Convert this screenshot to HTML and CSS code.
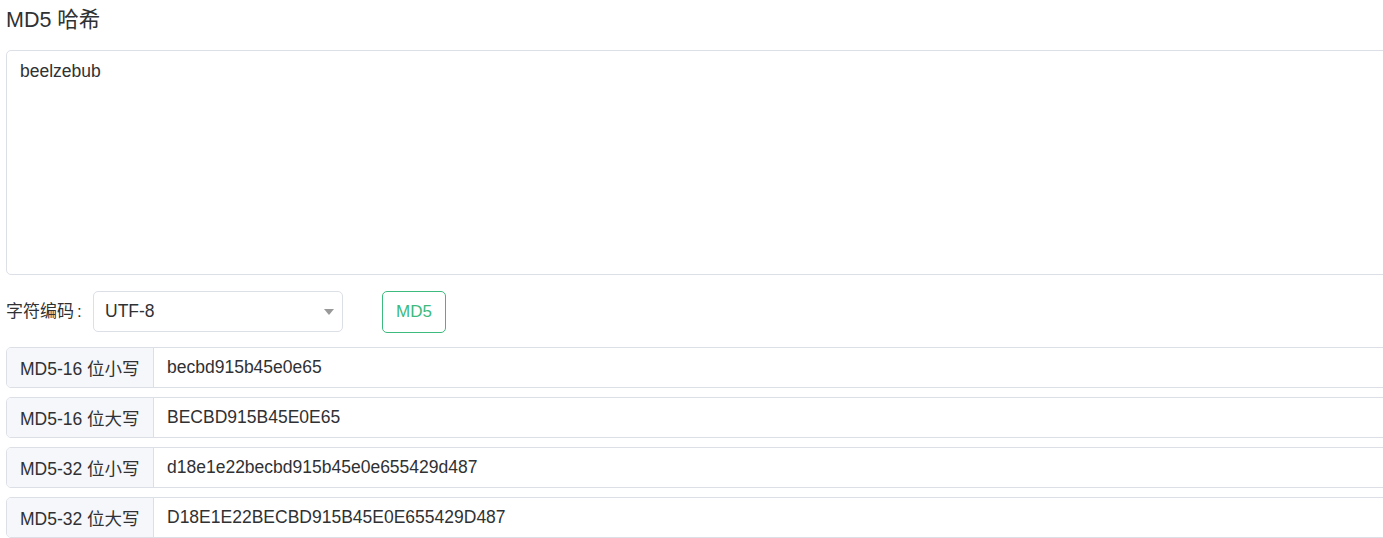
FILE: index.html
```html
<!DOCTYPE html>
<html lang="zh-CN">
<head>
<meta charset="utf-8">
<title>MD5 哈希</title>
<link rel="stylesheet" href="styles.css">
</head>
<body>
<div class="page">
  <h1 class="title">MD5 哈希</h1>
  <textarea class="source">beelzebub</textarea>
  <div class="controls">
    <label class="enc-label">字符编码<span class="colon">:</span></label>
    <div class="select">
      <span class="select-value">UTF-8</span>
      <span class="caret"></span>
    </div>
    <button class="btn-md5">MD5</button>
  </div>
  <div class="results">
    <div class="row"><div class="row-label">MD5-16 位小写</div><div class="row-value">becbd915b45e0e65</div></div>
    <div class="row"><div class="row-label">MD5-16 位大写</div><div class="row-value">BECBD915B45E0E65</div></div>
    <div class="row"><div class="row-label">MD5-32 位小写</div><div class="row-value">d18e1e22becbd915b45e0e655429d487</div></div>
    <div class="row"><div class="row-label">MD5-32 位大写</div><div class="row-value">D18E1E22BECBD915B45E0E655429D487</div></div>
  </div>
</div>
</body>
</html>
```

FILE: styles.css
```css
html, body {
  margin: 0;
  padding: 0;
  background: #fff;
  overflow: hidden;
}
body {
  font-family: "Liberation Sans", "Noto Sans CJK SC", sans-serif;
  color: #303133;
}
.page {
  width: 1420px;
  padding: 0 0 0 6px;
}
.title {
  margin: 0;
  height: 50px;
  padding-top: 5px;
  box-sizing: border-box;
  font-size: 21.5px;
  font-weight: normal;
  line-height: 30px;
  color: #303133;
}
.source {
  display: block;
  width: 100%;
  height: 225px;
  box-sizing: border-box;
  margin: 0;
  padding: 10px 13px;
  border: 1px solid #dcdfe6;
  border-radius: 5px;
  font-family: inherit;
  font-size: 17.5px;
  line-height: 20px;
  color: #303133;
  resize: none;
  outline: none;
}
.controls {
  display: flex;
  align-items: flex-start;
  margin-top: 16px;
  height: 42px;
}
.enc-label {
  font-size: 17px;
  line-height: 41px;
  color: #303133;
  width: 87px;
}
.colon {
  margin-left: 3px;
}
.select {
  position: relative;
  width: 250px;
  height: 41px;
  box-sizing: border-box;
  border: 1px solid #dcdfe6;
  border-radius: 5px;
  display: flex;
  align-items: center;
  padding-left: 11px;
  font-size: 17.5px;
}
.caret {
  position: absolute;
  right: 8px;
  top: 17px;
  width: 0;
  height: 0;
  border-left: 5px solid transparent;
  border-right: 5px solid transparent;
  border-top: 6px solid #999;
}
.btn-md5 {
  margin-left: 39px;
  width: 64px;
  height: 42px;
  box-sizing: border-box;
  background: #fff;
  border: 1px solid #3dba7e;
  border-radius: 5px;
  color: #3dba7e;
  font-family: inherit;
  font-size: 17px;
  padding: 0;
}
.results {
  margin-top: 14px;
  display: flex;
  flex-direction: column;
  gap: 9px;
}
.row {
  display: flex;
  height: 41px;
  box-sizing: border-box;
  border: 1px solid #dcdfe6;
  border-radius: 5px;
  font-size: 17.5px;
  overflow: hidden;
}
.row-label {
  width: 147px;
  box-sizing: border-box;
  background: #f5f7fa;
  border-right: 1px solid #dcdfe6;
  display: flex;
  align-items: center;
  padding-left: 13px;
  white-space: nowrap;
}
.row-value {
  flex: 1;
  display: flex;
  align-items: center;
  padding-left: 13px;
  white-space: nowrap;
}
```
